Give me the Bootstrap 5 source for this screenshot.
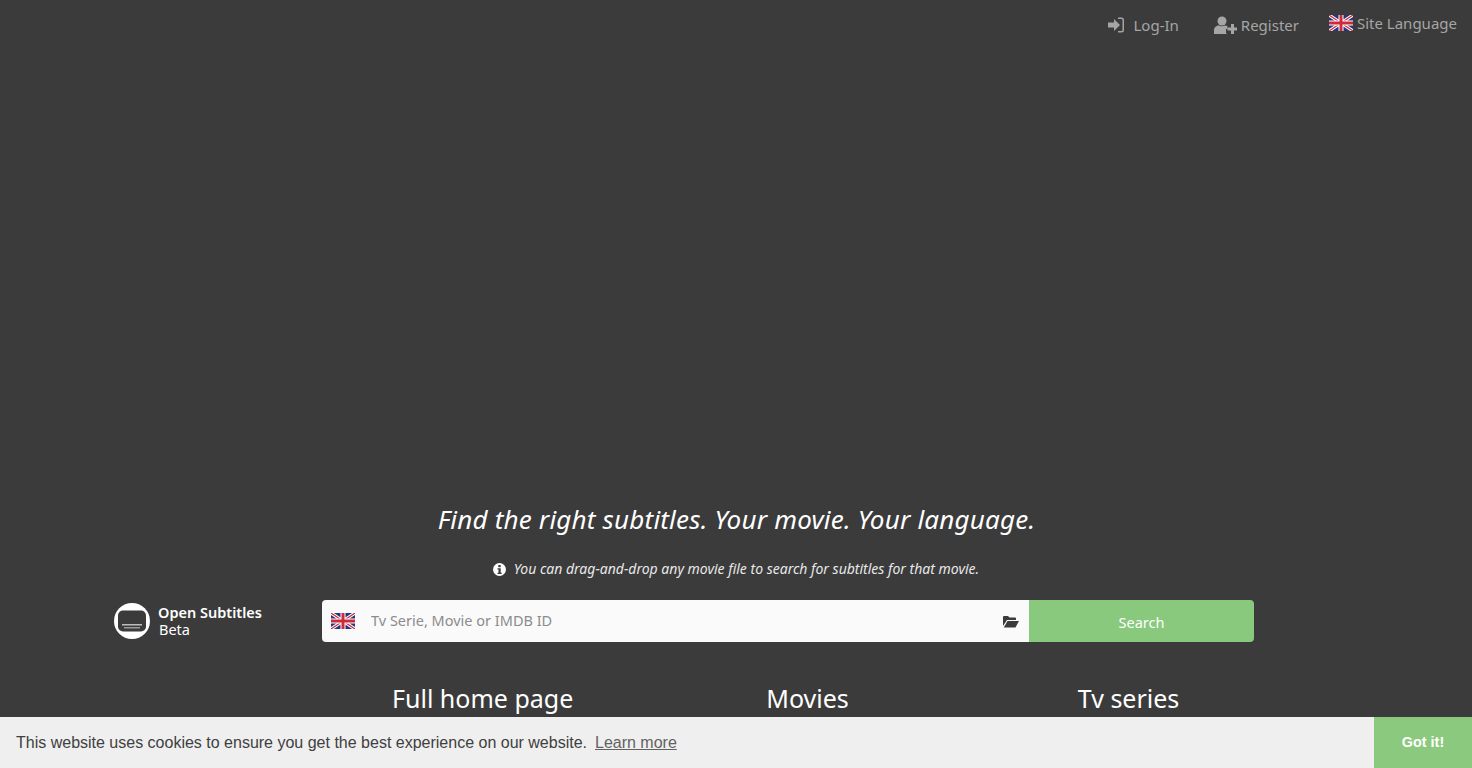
<!DOCTYPE html>
<html lang="en">
<head>
  <meta charset="UTF-8" />
  <meta name="viewport" content="width=device-width, initial-scale=1.0"/>
  <title>Open Subtitles</title>
  <link href="https://cdn.jsdelivr.net/npm/bootstrap@5.3.0/dist/css/bootstrap.min.css" rel="stylesheet"/>
  <style>
    html, body { height: 100%; overflow: hidden; }
    body { background: #3b3b3b; font-family: "Noto Sans", "Open Sans", sans-serif; color: #fff; }
    .top-links { height: 50px; padding-right: 15px; gap: 34px; font-size: 15px; color: #a5a5a5; }
    .top-links a { color: #a5a5a5; text-decoration: none; display: flex; align-items: center; }
    .top-links .lang-link { margin-left: -4px; margin-top: -4px; }
    .hero-spacer { height: 451px; }
    .tagline { font-size: 26px; font-style: italic; line-height: 36px; margin: 0 0 0 1px; letter-spacing: .2px; }
    .drag-hint { font-size: 14px; font-style: italic; color: #e8e8e8; line-height: 20px; margin-top: 22px; }
    .search-row { margin-top: 21px; height: 42px; }
    .logo-col { width: 322px; padding-left: 114px; }
    .logo-text { font-size: 14.5px; line-height: 17px; margin-left: 8px; }
    .logo-text b { font-weight: 600; display: block; }
    .logo-text span { margin-left: 1px; display: block; }
    .search-box { width: 707px; background: #fafafa; border-radius: 4px 0 0 4px; padding: 0 10px 0 9px; }
    .search-box input { border: 0; background: transparent; outline: 0; flex: 1; font-size: 14.5px; margin-left: 16px; color: #333; padding: 0; }
    .search-box input::placeholder { color: #8c8c8c; opacity: 1; }
    .search-go { width: 225px; background: #89c97d; color: #fff; border: 0; border-radius: 0 4px 4px 0; font-size: 14.5px; padding-top: 5px; }
    .section-heads { margin-top: 38px; font-size: 25px; line-height: 36px; padding-left: 392px; }
    .head-movies { margin-left: 193px; }
    .head-series { margin-left: 229px; }
    .cookie-bar { height: 51px; background: #efefef; color: #404040; font-family: "Liberation Sans", Arial, sans-serif; font-size: 16px; z-index: 10; }
    .cookie-bar a.learn { color: #404040; opacity: .8; margin-left: 2px; }
    .cookie-bar .got-it { width: 98px; background: #8bc97e; color: #fff; font-weight: 700; font-size: 14.4px; text-decoration: none; }
  </style>
</head>
<body>
  <!-- top links -->
  <div class="top-links d-flex justify-content-end align-items-center">
    <a href="#">
      <svg width="18" height="18" viewBox="0 0 18 18" class="me-2" fill="#a5a5a5"><path d="M1 6.5h6V3l6 6-6 6v-3.500H1z"/><path d="M11 1.500h3.500A2.500 2.500 0 0 1 17 4v10a2.500 2.500 0 0 1-2.500 2.500H11v-1.500h3.500a1 1 0 0 0 1-1V4a1 1 0 0 0-1-1H11z"/></svg>
      Log-In
    </a>
    <a href="#">
      <svg width="24" height="18" viewBox="0 0 24 18" class="me-1" fill="#a5a5a5"><circle cx="9" cy="5" r="4.500"/><path d="M1 18v-3.500C1 11 3.500 9.500 6 9.500c1.800 1 4.200 1 6 0 .8 0 1.700.2 2.400.6V13h-1.400v4l1 1z"/><path d="M18 8h3v3.500h3v3h-3V18h-3v-3.500h-3.500v-3H18z"/></svg>
      Register
    </a>
    <a href="#" class="lang-link">
      <svg width="24" height="16" viewBox="0 0 24 16" class="me-1"><use href="#ukFlag"/></svg>
      Site Language
    </a>
  </div>

  <svg width="0" height="0" class="d-block">
    <defs>
      <g id="ukFlag">
        <rect width="24" height="16" fill="#25357f"/>
        <path d="M0 0 24 16M24 0 0 16" stroke="#fff" stroke-width="3.200"/>
        <path d="M0 0 24 16M24 0 0 16" stroke="#cf2a3a" stroke-width="1.200"/>
        <path d="M12 0v16M0 8h24" stroke="#fff" stroke-width="5"/>
        <path d="M12 0v16M0 8h24" stroke="#cf2a3a" stroke-width="3"/>
      </g>
    </defs>
  </svg>

  <div class="hero-spacer"></div>

  <div class="text-center">
    <h1 class="tagline fw-normal">Find the right subtitles. Your movie. Your language.</h1>
    <div class="drag-hint d-flex justify-content-center align-items-center">
      <svg width="13" height="13" viewBox="0 0 13 13" class="me-2">
        <circle cx="6.500" cy="6.500" r="6.500" fill="#fff"/>
        <rect x="5.300" y="2" width="2.400" height="2.200" fill="#3b3b3b"/>
        <path d="M4.500 5.300h3.200v4.400h1v1.300H4.500V9.700h1V6.600h-1z" fill="#3b3b3b"/>
      </svg>
      You can drag-and-drop any movie file to search for subtitles for that movie.
    </div>
  </div>

  <!-- logo and search -->
  <div class="search-row d-flex">
    <div class="logo-col d-flex align-items-center">
      <svg width="36" height="36" viewBox="0 0 36 36">
        <circle cx="18" cy="18" r="18" fill="#fff"/>
        <rect x="4" y="7.500" width="28" height="21" rx="5" fill="#3b3b3b"/>
        <rect x="8" y="21" width="20" height="1.500" fill="#bdbdbd"/>
        <rect x="10" y="24" width="16" height="1.500" fill="#9a9a9a"/>
      </svg>
      <div class="logo-text">
        <b>Open Subtitles</b>
        <span>Beta</span>
      </div>
    </div>
    <div class="search-box d-flex align-items-center">
      <svg width="24" height="16" viewBox="0 0 24 16"><use href="#ukFlag"/></svg>
      <input type="text" placeholder="Tv Serie, Movie or IMDB ID" />
      <svg width="16" height="13" viewBox="0 0 16 13" fill="#3b3b3b">
        <path d="M0 11V2a1 1 0 0 1 1-1h4l1.500 1.500H12a1 1 0 0 1 1 1V5H4L0 11z"/>
        <path d="M4.500 6H16l-3.500 6.500H.8z"/>
      </svg>
    </div>
    <button type="button" class="search-go">Search</button>
  </div>

  <div class="section-heads d-flex">
    <div>Full home page</div>
    <div class="head-movies">Movies</div>
    <div class="head-series">Tv series</div>
  </div>

  <!-- cookie notice -->
  <div class="cookie-bar fixed-bottom d-flex align-items-stretch">
    <div class="flex-grow-1 d-flex align-items-center ps-3">
      This website uses cookies to ensure you get the best experience on our website.
      <a class="learn ms-2" href="#">Learn more</a>
    </div>
    <a class="got-it d-flex align-items-center justify-content-center" href="#">Got it!</a>
  </div>

  <script src="https://cdn.jsdelivr.net/npm/bootstrap@5.3.0/dist/js/bootstrap.bundle.min.js"></script>
</body>
</html>
